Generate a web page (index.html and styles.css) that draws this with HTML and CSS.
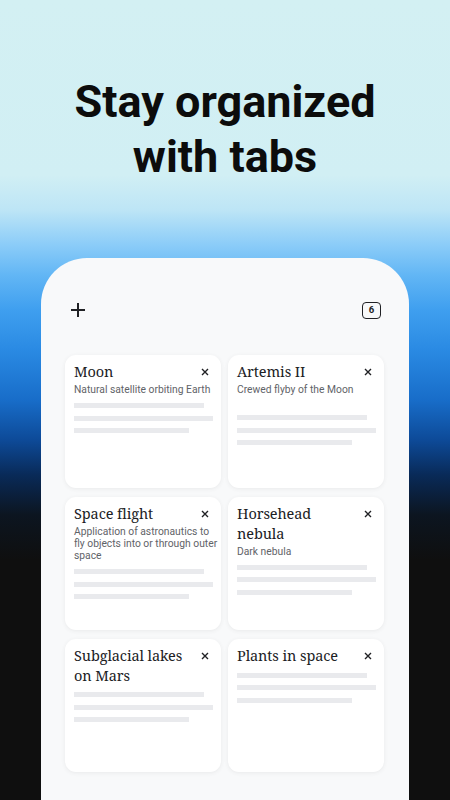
FILE: index.html
```html
<!DOCTYPE html>
<html>
<head>
    <title>Stay organized with tabs</title>
    <link rel="stylesheet" href="styles.css">
</head>
<body>
    <div class="hero">
        <h1>Stay organized<br>with tabs</h1>
    </div>

    <div class="phone">
        <div class="toolbar">
            <svg class="plus" width="16" height="16" viewBox="0 0 16 16">
                <path d="M8 1v14M1 8h14" stroke="#202124" stroke-width="2" fill="none"/>
            </svg>
            <div class="tab-count">6</div>
        </div>

        <div class="grid">
            <div class="card">
                <div class="card-head">
                    <div class="card-title">Moon</div>
                    <svg class="close" width="8" height="8" viewBox="0 0 8 8"><path d="M1 1l6 6M7 1l-6 6" stroke="#202124" stroke-width="1.4"/></svg>
                </div>
                <div class="card-sub">Natural satellite orbiting Earth</div>
                <div class="lines">
                    <span class="bar bar-a"></span>
                    <span class="bar bar-b"></span>
                    <span class="bar bar-c"></span>
                </div>
            </div>

            <div class="card">
                <div class="card-head">
                    <div class="card-title">Artemis II</div>
                    <svg class="close" width="8" height="8" viewBox="0 0 8 8"><path d="M1 1l6 6M7 1l-6 6" stroke="#202124" stroke-width="1.4"/></svg>
                </div>
                <div class="card-sub card-sub-tall">Crewed flyby of the Moon</div>
                <div class="lines">
                    <span class="bar bar-a"></span>
                    <span class="bar bar-b"></span>
                    <span class="bar bar-c"></span>
                </div>
            </div>

            <div class="card">
                <div class="card-head">
                    <div class="card-title">Space flight</div>
                    <svg class="close" width="8" height="8" viewBox="0 0 8 8"><path d="M1 1l6 6M7 1l-6 6" stroke="#202124" stroke-width="1.4"/></svg>
                </div>
                <div class="card-sub">Application of astronautics to fly objects into or through outer space</div>
                <div class="lines">
                    <span class="bar bar-a"></span>
                    <span class="bar bar-b"></span>
                    <span class="bar bar-c"></span>
                </div>
            </div>

            <div class="card">
                <div class="card-head">
                    <div class="card-title">Horsehead nebula</div>
                    <svg class="close" width="8" height="8" viewBox="0 0 8 8"><path d="M1 1l6 6M7 1l-6 6" stroke="#202124" stroke-width="1.4"/></svg>
                </div>
                <div class="card-sub">Dark nebula</div>
                <div class="lines">
                    <span class="bar bar-a"></span>
                    <span class="bar bar-b"></span>
                    <span class="bar bar-c"></span>
                </div>
            </div>

            <div class="card">
                <div class="card-head">
                    <div class="card-title">Subglacial lakes on Mars</div>
                    <svg class="close" width="8" height="8" viewBox="0 0 8 8"><path d="M1 1l6 6M7 1l-6 6" stroke="#202124" stroke-width="1.4"/></svg>
                </div>
                <div class="lines">
                    <span class="bar bar-a"></span>
                    <span class="bar bar-b"></span>
                    <span class="bar bar-c"></span>
                </div>
            </div>

            <div class="card">
                <div class="card-head">
                    <div class="card-title">Plants in space</div>
                    <svg class="close" width="8" height="8" viewBox="0 0 8 8"><path d="M1 1l6 6M7 1l-6 6" stroke="#202124" stroke-width="1.4"/></svg>
                </div>
                <div class="lines">
                    <span class="bar bar-a"></span>
                    <span class="bar bar-b"></span>
                    <span class="bar bar-c"></span>
                </div>
            </div>
        </div>
    </div>
</body>
</html>
```

FILE: styles.css
```css
html, body {
    margin: 0;
    padding: 0;
    height: 800px;
    overflow: hidden;
}
body {
    font-family: Roboto, "Liberation Sans", sans-serif;
    color: #202124;
    background: linear-gradient(to bottom,
        #d3f0f3 0px,
        #d1eff4 175px,
        #bde5f6 210px,
        #8bccf8 245px,
        #62b6f5 275px,
        #3f9fef 310px,
        #2a8ae3 350px,
        #186dc9 400px,
        #0d4a98 440px,
        #092a58 475px,
        #0c1520 515px,
        #0f0f0f 560px,
        #0f0f0f 800px);
}
.hero {
    padding-top: 74px;
    height: 184px;
    box-sizing: border-box;
}
h1 {
    margin: 0;
    text-align: center;
    font-size: 45px;
    line-height: 55px;
    font-weight: 700;
    color: #0c0c0c;
}
.phone {
    margin: 74px 0 0 41px;
    width: 368px;
    height: 542px;
    background: #f8f9fa;
    border-radius: 46px 46px 0 0;
    box-sizing: border-box;
    padding-top: 43px;
}
.toolbar {
    display: flex;
    justify-content: space-between;
    align-items: center;
    height: 18px;
    padding: 0 28px 0 29px;
}
.plus {
    display: block;
}
.tab-count {
    width: 19px;
    height: 17px;
    box-sizing: border-box;
    border: 1.8px solid #202124;
    border-radius: 4px;
    font-size: 9.5px;
    font-weight: 700;
    line-height: 14px;
    text-align: center;
}
.grid {
    display: grid;
    grid-template-columns: 156px 156px;
    grid-auto-rows: 133px;
    column-gap: 7px;
    row-gap: 9px;
    margin-top: 36px;
    padding-left: 24px;
}
.card {
    background: #fff;
    border-radius: 11px;
    box-shadow: 0 1px 4px rgba(60, 64, 67, 0.08);
    padding: 7px 4px 7px 9px;
}
.card-head {
    display: flex;
    justify-content: space-between;
    align-items: flex-start;
}
.card-title {
    font-family: "Noto Serif", "DejaVu Serif Condensed", "DejaVu Serif", serif;
    font-size: 14.5px;
    letter-spacing: -0.1px;
    line-height: 19.5px;
    color: #202124;
    max-width: 118px;
}
.close {
    display: block;
    margin: 6px 8px 0 0;
    flex-shrink: 0;
}
.card-sub {
    margin: 2.5px -3px 0 0;
    font-size: 10.3px;
    line-height: 12px;
    color: #5f6368;
}
.card-sub-tall {
    padding-bottom: 12px;
}
.lines {
    margin-top: 7px;
    display: flex;
    flex-direction: column;
    gap: 7.5px;
}
.bar {
    display: block;
    height: 5px;
    background: #e9eaed;
}
.bar-a { width: 130px; }
.bar-b { width: 139px; }
.bar-c { width: 115px; }
```
